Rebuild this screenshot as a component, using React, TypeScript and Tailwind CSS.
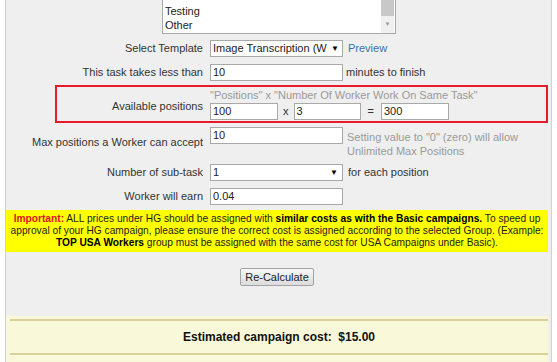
const font = "font-['Liberation_Sans',Arial,sans-serif]";

const Field = ({ value, w = "w-[133px]" }: { value: string; w?: string }) => (
	<div className={`${w} h-[17px] border border-[#a9a9a9] bg-white pl-[2px] leading-[15px] text-[#222]`}>{value}</div>
);

const Dropdown = ({ value }: { value: string }) => (
	<div className="flex w-[133px] h-[17px] items-center border border-[#a9a9a9] bg-white pl-[2px] pr-[3px] text-[#222]">
		<span className="flex-1 overflow-hidden whitespace-nowrap leading-[15px]">{value}</span>
		<span className="text-[8px] text-black">▼</span>
	</div>
);

const Row = ({ label, children, className = "" }: { label: string; children: React.ReactNode; className?: string }) => (
	<div className={`flex items-center ${className}`}>
		<div className="w-[197px] shrink-0 text-right">{label}</div>
		<div className="ml-[7px] flex items-center">{children}</div>
	</div>
);

export default function App() {
	return (
		<div className={`h-[362px] w-[557px] overflow-hidden bg-white text-[11px] text-[#333] ${font}`}>
			<div className="ml-[5px] flex h-full w-[547px] flex-col border-x border-[#d0d0d0] bg-[#efefef]">
				{/* list box, scrolled to bottom */}
				<div className="ml-[156px] flex h-[34px] w-[234px] border-x border-b border-[#a9a9a9] bg-white">
					<div className="flex flex-1 flex-col justify-end overflow-hidden pb-[1px] pl-[2px] leading-[14px] text-[#222]">
						<div>Testing</div>
						<div>Other</div>
					</div>
					<div className="mr-[1px] flex w-[13px] flex-col bg-[#f0f0f0]">
						<div className="h-[16px] bg-[#c8c8c8]" />
						<div className="mt-[4px] text-center text-[6px] leading-[8px] text-[#9a9a9a]">▼</div>
					</div>
				</div>

				<Row label="Select Template" className="mt-[6px]">
					<Dropdown value="Image Transcription (W" />
					<span className="ml-[5px] text-[#3b6fb0]">Preview</span>
				</Row>

				<Row label="This task takes less than" className="mt-[7px]">
					<Field value="10" />
					<span className="ml-[3px]">minutes to finish</span>
				</Row>

				<div className="ml-[49px] mr-[3px] mt-[4px] flex h-[38px] items-center border-2 border-[#e8192c]">
					<div className="w-[146px] shrink-0 pt-[4px] text-right">Available positions</div>
					<div className="ml-[7px] flex flex-col">
						<div className="leading-[15px] text-[#9a9a9a]">"Positions" x "Number Of Worker Work On Same Task"</div>
						<div className="flex items-center">
							<Field value="100" w="w-[68px]" />
							<span className="mx-[5px]">x</span>
							<Field value="3" w="w-[67px]" />
							<span className="mx-[7px]">=</span>
							<Field value="300" w="w-[68px]" />
						</div>
					</div>
				</div>

				<Row label="Max positions a Worker can accept" className="mt-[4px]">
					<div className="self-start">
						<Field value="10" />
					</div>
					<div className="ml-[4px] pt-[3px] leading-[14px] text-[#9a9a9a]">
						Setting value to "0" (zero) will allow
						<br />
						Unlimited Max Positions
					</div>
				</Row>

				<Row label="Number of sub-task" className="mt-[6px]">
					<div className="flex w-[133px] h-[17px] items-center border border-[#a9a9a9] bg-white pl-[2px] pr-[4px] text-[#222]">
						<span className="flex-1 leading-[15px]">1</span>
						<span className="text-[8px] text-black">▼</span>
					</div>
					<span className="ml-[5px]">for each position</span>
				</Row>

				<Row label="Worker will earn" className="mt-[7px]">
					<Field value="0.04" />
				</Row>

				<div className="mr-[3px] mt-[5px] h-[42px] whitespace-nowrap bg-[#ffff00] pt-[3px] text-center text-[10.2px] leading-[12px] text-[#222]">
					<span className="font-bold text-[#e0141e]">Important:</span> ALL prices under HG should be assigned with{" "}
					<span className="font-bold text-black">similar costs as with the Basic campaigns.</span> To speed up
					<br />
					approval of your HG campaign, please ensure the correct cost is assigned according to the selected Group. (Example:
					<br />
					<span className="font-bold text-black">TOP USA Workers</span> group must be assigned with the same cost for USA Campaigns under Basic).
				</div>

				<div className="mr-[3px] mt-[16px] flex justify-center">
					<button className="h-[18px] w-[74px] rounded-[2px] border border-[#a3a3a3] bg-gradient-to-b from-[#f7f7f7] to-[#dcdcdc] text-[11px] leading-[16px] text-[#222]">
						Re-Calculate
					</button>
				</div>

				<div className="mr-[3px] mt-[30px] flex-1 bg-[#f9f8d8] pt-[3px]">
					<div className="ml-[4px] flex h-[36px] items-center justify-center border-y-2 border-[#d7d39c] text-[12px] font-bold text-[#111]">
						Estimated campaign cost:&nbsp; $15.00
					</div>
				</div>
			</div>
		</div>
	);
}
